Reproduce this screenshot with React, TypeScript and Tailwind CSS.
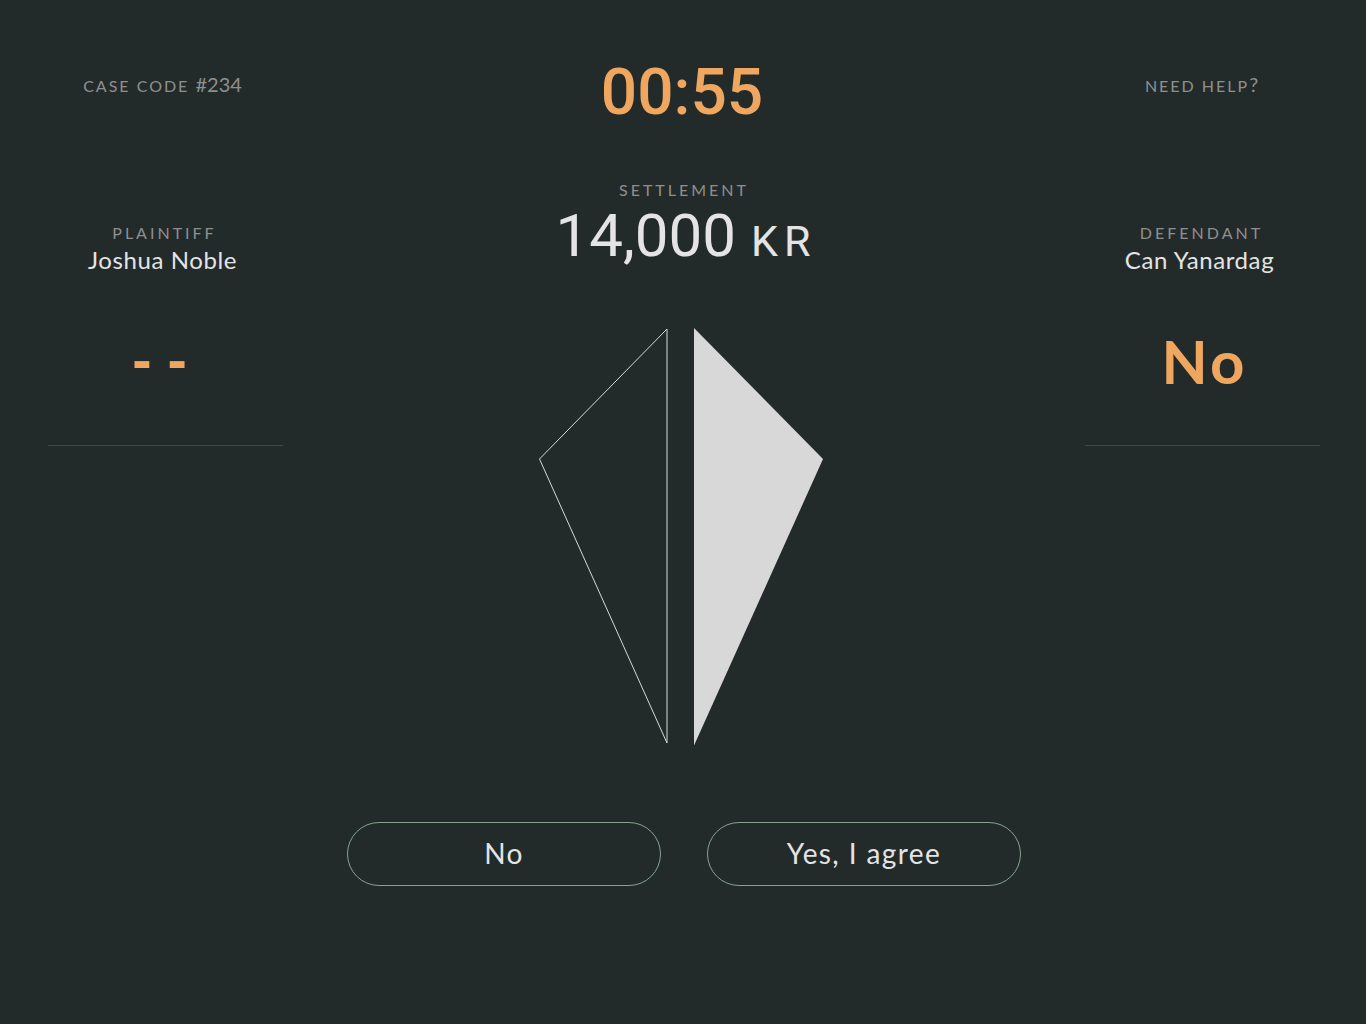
type PartyProps = {
  role: string;
  name: string;
  answer: string;
  pending?: boolean;
};

function Party({ role, name, answer, pending }: PartyProps) {
  return (
    <section className="mt-[123px] flex flex-col items-center border-b border-[#424746] pb-11 text-center">
      <h2 className="pr-0.5 text-base leading-5 tracking-[3px] text-[#8e908f] uppercase">{role}</h2>
      <p className="pt-px pr-1.5 text-2xl leading-8 tracking-wide text-[#e4e4e4]">{name}</p>
      <p
        className={
          pending
            ? "mt-11 pr-3 pb-px font-['Liberation_Sans',sans-serif] text-[58px] leading-[80px] font-bold text-[#efa65f]"
            : "mt-11 pt-px pl-1 text-[60px] leading-[80px] font-bold tracking-wider text-[#efa65f]"
        }
      >
        {answer}
      </p>
    </section>
  );
}

function Diamond() {
  return (
    <svg className="mt-12.5 mr-1.5 h-[418px] w-[286px]" viewBox="538 327 286 418" aria-hidden="true">
      <path d="M667 329 L539.5 459 L667 743 Z" fill="none" stroke="#d8d8d8" strokeWidth="1" />
      <path d="M694 328 L823 459 L694 745.5 Z" fill="#d8d8d8" />
    </svg>
  );
}

const buttonClass =
  "h-16 max-w-[314px] flex-1 cursor-pointer rounded-full border border-[#84a491] pb-0.5 text-[28px] leading-8 tracking-wider text-[#e4e4e4]";

export default function App() {
  return (
    <main className="grid min-h-screen grid-cols-[235px_1fr_235px] items-start bg-[#232b2a] pt-16 pr-[46px] pl-12 font-['Lato',sans-serif]">
      <div>
        <p className="pt-1.5 pr-1.5 text-center text-base leading-7 tracking-[2px] text-[#8e908f] uppercase">
          Case code <span className="text-xl leading-7 tracking-normal">#234</span>
        </p>
        <Party role="Plaintiff" name="Joshua Noble" answer="- -" pending />
      </div>

      <div className="flex flex-col items-center">
        <time className="pt-px pr-1 font-['Roboto',sans-serif] text-[64px] leading-14 font-medium text-[#efa65f]">
          00:55
        </time>
        <h1 className="mt-[59px] text-base leading-5 tracking-[3px] text-[#8e908f] uppercase">Settlement</h1>
        <p className="pl-1 font-['Roboto',sans-serif] text-[60px] leading-[72px] text-[#e4e4e4]">
          14,000 <span className="text-[43px] tracking-[6px]">KR</span>
        </p>
        <Diamond />
        <div className="mt-[77px] flex w-full justify-center gap-[46px]">
          <button type="button" className={buttonClass}>
            No
          </button>
          <button type="button" className={buttonClass}>
            Yes, I agree
          </button>
        </div>
      </div>

      <div>
        <p className="pt-1.5 text-center text-base leading-7 tracking-[2px] text-[#8e908f] uppercase">
          <a href="#help">
            Need help<span className="text-xl leading-7">?</span>
          </a>
        </p>
        <Party role="Defendant" name="Can Yanardag" answer="No" />
      </div>
    </main>
  );
}
